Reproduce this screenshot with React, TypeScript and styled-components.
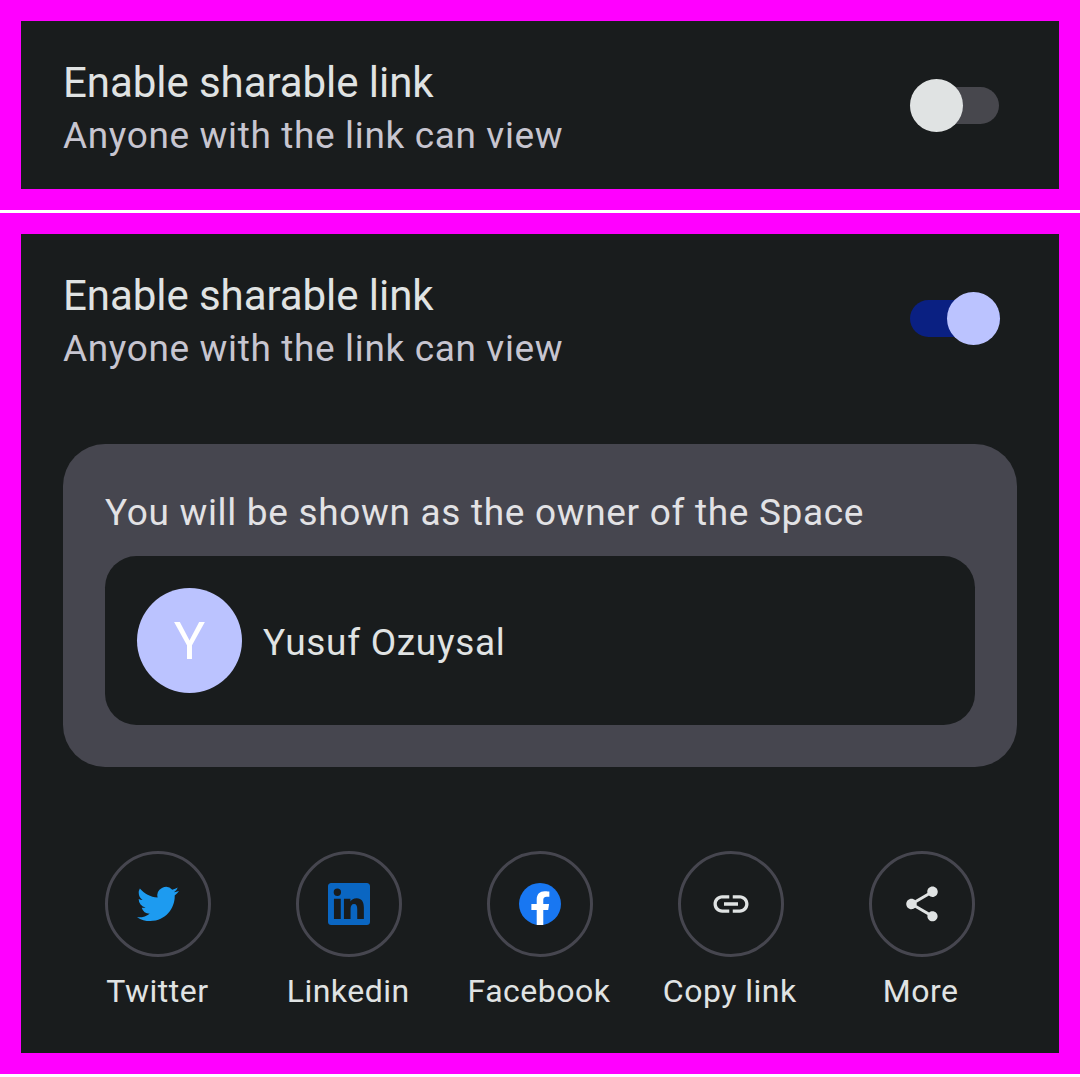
import React from "react";
import styled, { createGlobalStyle } from "styled-components";

const GlobalStyle = createGlobalStyle`
  *, *::before, *::after { box-sizing: border-box; }
  body {
    margin: 0;
    background: #ffffff;
    font-family: Roboto, "Noto Sans", sans-serif;
    color: #e0e3e3;
  }
`;

const Page = styled.main`
  width: 1080px;
  height: 1077px;
  display: flex;
  flex-direction: column;
  gap: 3px;
`;

const Preview = styled.section<{ $height: number }>`
  height: ${(p) => p.$height}px;
  border: 21px solid #ff00ff;
  background: #191c1d;
  padding: 0 42px;
  display: flex;
  flex-direction: column;
`;

const SettingRow = styled.div`
  height: 168px;
  display: flex;
  align-items: center;
  justify-content: space-between;
  padding-right: 17px;
`;

const SettingText = styled.div`
  display: flex;
  flex-direction: column;
  padding-top: 8px;
`;

const Title = styled.span`
  font-size: 42px;
  line-height: 54px;
  letter-spacing: -0.06px;
  white-space: nowrap;
`;

const Subtitle = styled.span`
  font-size: 37px;
  line-height: 52px;
  letter-spacing: 0.64px;
  color: #c7c5d0;
  white-space: nowrap;
`;

const Track = styled.button<{ $on: boolean }>`
  width: ${(p) => (p.$on ? 90 : 89)}px;
  height: 37px;
  margin: 0;
  margin-right: ${(p) => (p.$on ? 0 : 1)}px;
  padding: 0;
  border: 0;
  border-radius: 19px;
  background: ${(p) => (p.$on ? "#0a2082" : "#47474d")};
  display: flex;
  align-items: center;
  justify-content: ${(p) => (p.$on ? "flex-end" : "flex-start")};
`;

const Thumb = styled.span<{ $on: boolean }>`
  flex: none;
  width: 53px;
  height: 53px;
  border-radius: 50%;
  background: ${(p) => (p.$on ? "#bbc3ff" : "#e0e3e3")};
`;

const OwnerCard = styled.div`
  height: 323px;
  margin-top: 42px;
  padding: 42px;
  border-radius: 42px;
  background: #46464f;
  display: flex;
  flex-direction: column;
  justify-content: space-between;
`;

const OwnerHint = styled.span`
  font-size: 37px;
  line-height: 53px;
  letter-spacing: 0.68px;
  color: #e2e2e5;
  white-space: nowrap;
`;

const Owner = styled.div`
  height: 169px;
  padding: 0 32px;
  border-radius: 31.5px;
  background: #191c1d;
  display: flex;
  align-items: center;
  gap: 21px;
`;

const Avatar = styled.div`
  width: 105px;
  height: 105px;
  border-radius: 50%;
  background: #bbc3ff;
  color: #ffffff;
  font-size: 52.5px;
  line-height: 106px;
  text-align: center;
`;

const OwnerName = styled.span`
  font-size: 37px;
  line-height: 53px;
  letter-spacing: 0.7px;
  padding-top: 3px;
`;

const ShareRow = styled.div`
  margin-top: 84px;
  display: grid;
  grid-template-columns: repeat(5, 1fr);
`;

const ShareItem = styled.div`
  display: flex;
  flex-direction: column;
  align-items: center;
  gap: 13px;
`;

const ShareCircle = styled.div`
  width: 106px;
  height: 106px;
  border: 3px solid #46464f;
  border-radius: 50%;
  display: grid;
  place-items: center;
`;

const ShareLabel = styled.span`
  font-size: 32px;
  line-height: 42px;
  letter-spacing: 0.5px;
  padding-right: 2px;
  white-space: nowrap;
`;

const Icon = styled.svg`
  width: 42px;
  height: 42px;
  display: block;
`;

const TwitterIcon = () => (
  <Icon viewBox="0 0 24 24" fill="#1d9bf0">
    <path d="M23.953 4.57a10 10 0 01-2.825.775 4.958 4.958 0 002.163-2.723c-.951.555-2.005.959-3.127 1.184a4.92 4.92 0 00-8.384 4.482C7.69 8.095 4.067 6.13 1.64 3.162a4.822 4.822 0 00-.666 2.475c0 1.71.87 3.213 2.188 4.096a4.904 4.904 0 01-2.228-.616v.06a4.923 4.923 0 003.946 4.827 4.996 4.996 0 01-2.212.085 4.936 4.936 0 004.604 3.417 9.867 9.867 0 01-6.102 2.105c-.39 0-.779-.023-1.17-.067a13.995 13.995 0 007.557 2.209c9.053 0 13.998-7.496 13.998-13.985 0-.21 0-.42-.015-.63A9.935 9.935 0 0024 4.59z" />
  </Icon>
);

const LinkedinIcon = () => (
  <Icon viewBox="0 0 24 24" fill="#0a66c2">
    <path
      fillRule="evenodd"
      d="M1.77 0h20.46C23.2 0 24 .77 24 1.73v20.54c0 .96-.8 1.73-1.77 1.73H1.77C.8 24 0 23.23 0 22.27V1.73C0 .77.8 0 1.77 0zM5.35 3.2a2.1 2.1 0 100 4.2 2.1 2.1 0 000-4.2zM3.4 9v11.6h3.9V9zM9.1 9v11.6h3.8v-5.7c0-1.7.6-2.9 2-2.9s1.8 1.2 1.8 2.9v5.7h3.8v-6.4c0-3.4-1.2-5.5-4.1-5.5-1.8 0-3 .9-3.6 1.9V9z"
    />
  </Icon>
);

const FacebookIcon = () => (
  <Icon viewBox="0 0 24 24">
    <circle cx="12" cy="12" r="12" fill="#1877f2" />
    <path
      fill="#ffffff"
      d="M16.67 15.47l.532-3.47h-3.328V9.75c0-.949.465-1.874 1.956-1.874h1.513V4.923s-1.374-.235-2.686-.235c-2.741 0-4.533 1.662-4.533 4.669V12H7.078v3.47h3.047V24h3.749v-8.53z"
    />
  </Icon>
);

const LinkIcon = () => (
  <Icon viewBox="0 0 24 24" fill="#e0e3e3">
    <path d="M3.9 12c0-1.71 1.39-3.1 3.1-3.1h4V7H7c-2.76 0-5 2.24-5 5s2.24 5 5 5h4v-1.9H7c-1.71 0-3.1-1.39-3.1-3.1zM8 13h8v-2H8v2zm9-6h-4v1.9h4c1.71 0 3.1 1.39 3.1 3.1s-1.39 3.1-3.1 3.1h-4V17h4c2.76 0 5-2.24 5-5s-2.24-5-5-5z" />
  </Icon>
);

const MoreIcon = () => (
  <Icon viewBox="0 0 24 24" fill="#e0e3e3">
    <path d="M18 16.08c-.76 0-1.44.3-1.96.77L8.91 12.7c.05-.23.09-.46.09-.7s-.04-.47-.09-.7l7.05-4.11c.54.5 1.25.81 2.04.81 1.66 0 3-1.34 3-3s-1.34-3-3-3-3 1.34-3 3c0 .24.04.47.09.7L8.04 9.81C7.5 9.31 6.79 9 6 9c-1.66 0-3 1.34-3 3s1.34 3 3 3c.79 0 1.5-.31 2.04-.81l7.12 4.16c-.05.21-.08.43-.08.65 0 1.61 1.31 2.92 2.92 2.92s2.92-1.31 2.92-2.92-1.31-2.92-2.92-2.92z" />
  </Icon>
);

const targets = [
  { label: "Twitter", Glyph: TwitterIcon },
  { label: "Linkedin", Glyph: LinkedinIcon },
  { label: "Facebook", Glyph: FacebookIcon },
  { label: "Copy link", Glyph: LinkIcon },
  { label: "More", Glyph: MoreIcon },
];

const SharableLinkSetting = ({ on }: { on: boolean }) => (
  <SettingRow>
    <SettingText>
      <Title>Enable sharable link</Title>
      <Subtitle>Anyone with the link can view</Subtitle>
    </SettingText>
    <Track $on={on} role="switch" aria-checked={on}>
      <Thumb $on={on} />
    </Track>
  </SettingRow>
);

export default function App() {
  return (
    <>
      <GlobalStyle />
      <Page>
        <Preview $height={210}>
          <SharableLinkSetting on={false} />
        </Preview>
        <Preview $height={861}>
          <SharableLinkSetting on />
          <OwnerCard>
            <OwnerHint>You will be shown as the owner of the Space</OwnerHint>
            <Owner>
              <Avatar>Y</Avatar>
              <OwnerName>Yusuf Ozuysal</OwnerName>
            </Owner>
          </OwnerCard>
          <ShareRow>
            {targets.map(({ label, Glyph }) => (
              <ShareItem key={label}>
                <ShareCircle>
                  <Glyph />
                </ShareCircle>
                <ShareLabel>{label}</ShareLabel>
              </ShareItem>
            ))}
          </ShareRow>
        </Preview>
      </Page>
    </>
  );
}
